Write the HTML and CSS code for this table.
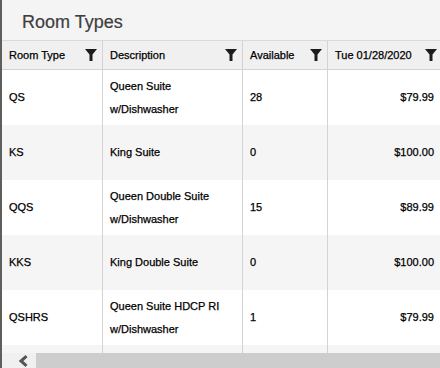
FILE: index.html
```html
<!DOCTYPE html>
<html>
<head>
<meta charset="utf-8">
<link rel="stylesheet" href="styles.css">
</head>
<body>
<div class="page">
  <div class="edge"></div>
  <div class="panel">
    <div class="title">Room Types</div>
    <div class="grid">
      <div class="row head">
        <div class="cell">Room Type<svg class="filter" viewBox="0 0 12 12"><path d="M0 0H12L7.5 5.5V12H4.5V5.5Z"/></svg></div>
        <div class="cell">Description<svg class="filter" viewBox="0 0 12 12"><path d="M0 0H12L7.5 5.5V12H4.5V5.5Z"/></svg></div>
        <div class="cell">Available<svg class="filter" viewBox="0 0 12 12"><path d="M0 0H12L7.5 5.5V12H4.5V5.5Z"/></svg></div>
        <div class="cell">Tue 01/28/2020<svg class="filter" viewBox="0 0 12 12"><path d="M0 0H12L7.5 5.5V12H4.5V5.5Z"/></svg></div>
      </div>
      <div class="row">
        <div class="cell">QS</div>
        <div class="cell">Queen Suite<br>w/Dishwasher</div>
        <div class="cell">28</div>
        <div class="cell num">$79.99</div>
      </div>
      <div class="row alt">
        <div class="cell">KS</div>
        <div class="cell">King Suite</div>
        <div class="cell">0</div>
        <div class="cell num">$100.00</div>
      </div>
      <div class="row">
        <div class="cell">QQS</div>
        <div class="cell">Queen Double Suite<br>w/Dishwasher</div>
        <div class="cell">15</div>
        <div class="cell num">$89.99</div>
      </div>
      <div class="row alt">
        <div class="cell">KKS</div>
        <div class="cell">King Double Suite</div>
        <div class="cell">0</div>
        <div class="cell num">$100.00</div>
      </div>
      <div class="row">
        <div class="cell">QSHRS</div>
        <div class="cell">Queen Suite HDCP RI<br>w/Dishwasher</div>
        <div class="cell">1</div>
        <div class="cell num">$79.99</div>
      </div>
      <div class="row alt">
        <div class="cell"></div>
        <div class="cell"></div>
        <div class="cell"></div>
        <div class="cell num"></div>
      </div>
    </div>
    <div class="scrollbar">
      <div class="sb-btn"><svg class="chev" viewBox="0 0 10 12"><polyline points="8.5,1.2 3,6 8.5,10.8"/></svg></div>
      <div class="sb-thumb"></div>
    </div>
  </div>
</div>
</body>
</html>
```

FILE: styles.css
```css
html, body {
  margin: 0;
  padding: 0;
}
body {
  width: 440px;
  height: 368px;
  overflow: hidden;
  font-family: Arial, "Liberation Sans", Arimo, sans-serif;
  background: #ffffff;
}
.page {
  display: flex;
  height: 368px;
}
.edge {
  width: 2px;
  flex: none;
  background: #5e5e5a;
}
.panel {
  flex: 1;
  min-width: 0;
  display: flex;
  flex-direction: column;
  overflow: hidden;
}
.title {
  height: 40px;
  box-sizing: border-box;
  padding: 4px 0 0 20px;
  line-height: 36px;
  font-size: 18px;
  color: #3e3e3e;
  background: #f4f4f4;
  flex: none;
  -webkit-text-stroke: 0.2px #3e3e3e;
}
.grid {
  height: 313px;
  overflow: hidden;
  flex: none;
}
.row {
  display: grid;
  grid-template-columns: 100px 140px 85px 115px;
  height: 55px;
  background: #ffffff;
}
.row.alt {
  background: #f5f5f5;
}
.row.head {
  height: 30px;
  box-sizing: border-box;
  border-top: 1px solid #dadada;
  border-bottom: 1px solid #d2d2d2;
  background: #f0f0f0;
}
.cell {
  box-sizing: border-box;
  display: flex;
  align-items: center;
  padding: 0 7px;
  font-size: 11px;
  line-height: 23px;
  color: #000000;
  min-width: 0;
  white-space: nowrap;
  -webkit-text-stroke: 0.25px #000000;
}
.cell + .cell {
  border-left: 1px solid #d3d3d3;
}
.cell.num {
  justify-content: flex-end;
  padding-right: 8px;
}
.head .cell {
  justify-content: space-between;
  padding: 0 5px 0 7px;
  color: #000000;
}
.filter {
  width: 12px;
  height: 12px;
  flex: none;
  fill: #1c1c1c;
}
.scrollbar {
  height: 15px;
  flex: none;
  display: flex;
}
.sb-btn {
  width: 34px;
  flex: none;
  background: #f0f0f0;
  display: flex;
  align-items: center;
  padding-left: 16px;
  box-sizing: border-box;
}
.chev {
  width: 10px;
  height: 12px;
  fill: none;
  stroke: #555555;
  stroke-width: 3;
}
.sb-thumb {
  flex: 1;
  background: #cdcdcd;
}
```
